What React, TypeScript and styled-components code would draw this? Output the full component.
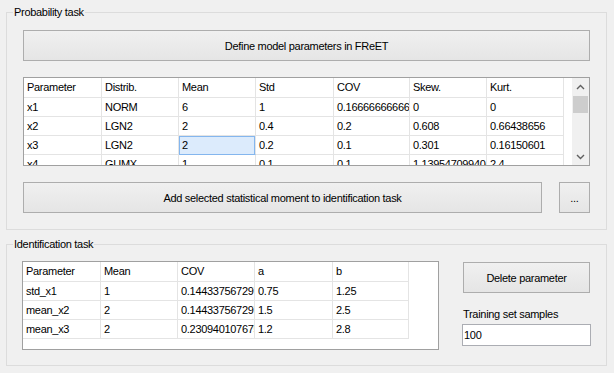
import React from "react";
import styled, { createGlobalStyle } from "styled-components";

const GlobalStyle = createGlobalStyle`
  html, body { margin: 0; padding: 0; background: #f0f0f0; }
  body {
    font-family: "Liberation Sans", Arial, sans-serif;
    font-size: 11px;
    letter-spacing: -0.3px;
    color: #000;
  }
  * { box-sizing: border-box; }
`;

const Window = styled.div`
  width: 614px;
  height: 373px;
  padding: 12px 7px 0 6px;
  display: flex;
  flex-direction: column;
  gap: 14px;
`;

const GroupBox = styled.section`
  border: 1px solid #dcdcdc;
  display: flex;
  flex-direction: column;
`;

const Legend = styled.div`
  align-self: flex-start;
  height: 13px;
  line-height: 13px;
  margin: -7px 0 -6px 6px;
  padding: 0 1px;
  background: #f0f0f0;
  white-space: nowrap;
`;

const ProbBody = styled.div`
  padding: 17px 16px 16px 16px;
  display: flex;
  flex-direction: column;
  gap: 16px;
`;

const IdentBody = styled.div`
  padding: 16px 16px 15px 15px;
  display: flex;
  gap: 24px;
`;

const ButtonRow = styled.div`
  display: flex;
  gap: 17px;
`;

const WinButton = styled.button<{ $w?: number }>`
  height: 31px;
  width: ${(p) => (p.$w ? `${p.$w}px` : "100%")};
  flex: none;
  border: 1px solid #adadad;
  border-radius: 0;
  background: linear-gradient(#f0f0f0, #e5e5e5);
  font: inherit;
  letter-spacing: inherit;
  color: #000;
  padding: 0;
`;

const GridFrame = styled.div<{ $w: number }>`
  width: ${(p) => p.$w}px;
  height: 89px;
  flex: none;
  border: 1px solid #a0a0a0;
  background: #fff;
  display: flex;
  overflow: hidden;
`;

const GridBody = styled.div`
  flex: 1;
  overflow: hidden;
`;

const Row = styled.div<{ $header?: boolean }>`
  display: flex;
  height: ${(p) => (p.$header ? 20 : 19)}px;
`;

const Cell = styled.div<{ $w: number; $header?: boolean; $selected?: boolean }>`
  width: ${(p) => p.$w}px;
  flex: none;
  border-right: 1px solid #e4e4e4;
  border-bottom: 1px solid ${(p) => (p.$selected ? "#84b6ee" : "#e4e4e4")};
  padding-left: 3px;
  line-height: ${(p) => (p.$header ? 19 : 18)}px;
  white-space: nowrap;
  overflow: hidden;
  background: ${(p) => (p.$selected ? "#dcebfc" : "transparent")};
  box-shadow: ${(p) =>
    p.$selected
      ? "inset 1px 0 0 #84b6ee, inset -1px 0 0 #84b6ee, inset 0 1px 0 #84b6ee"
      : "none"};
`;

const ScrollBar = styled.div`
  width: 17px;
  flex: none;
  background: #f0f0f0;
  display: flex;
  flex-direction: column;
`;

const ScrollArrow = styled.div`
  height: 17px;
  flex: none;
  display: flex;
  align-items: center;
  justify-content: center;
`;

const Track = styled.div`
  flex: 1;
  padding: 1px 1px 0 1px;
`;

const Thumb = styled.div`
  height: 17px;
  background: #cdcdcd;
`;

const SideColumn = styled.div`
  width: 127px;
  margin-top: 1px;
  display: flex;
  flex-direction: column;
`;

const FieldLabel = styled.div`
  margin-top: 15px;
  line-height: 13px;
  white-space: nowrap;
`;

const TextBox = styled.input`
  margin: 3px 0 0 -1px;
  width: 129px;
  height: 22px;
  border: 1px solid #abadb3;
  background: #fff;
  font: inherit;
  letter-spacing: inherit;
  color: #000;
  padding: 0 0 0 1px;
  outline: none;
`;

type GridProps = {
  width: number;
  cols: number[];
  header: string[];
  rows: string[][];
  selected?: [number, number];
  scroll?: boolean;
};

const Chevron = ({ up }: { up?: boolean }) => (
  <svg width="9" height="6" viewBox="0 0 9 6">
    <polyline
      points={up ? "1,5 4.5,1.5 8,5" : "1,1 4.5,4.5 8,1"}
      fill="none"
      stroke="#606060"
      strokeWidth="1.4"
    />
  </svg>
);

const DataGrid = ({ width, cols, header, rows, selected, scroll }: GridProps) => (
  <GridFrame $w={width}>
    <GridBody>
      <Row $header>
        {header.map((h, i) => (
          <Cell key={i} $w={cols[i]} $header>
            {h}
          </Cell>
        ))}
      </Row>
      {rows.map((r, ri) => (
        <Row key={ri}>
          {r.map((v, ci) => (
            <Cell
              key={ci}
              $w={cols[ci]}
              $selected={!!selected && selected[0] === ri && selected[1] === ci}
            >
              {v}
            </Cell>
          ))}
        </Row>
      ))}
    </GridBody>
    {scroll && (
      <ScrollBar>
        <ScrollArrow>
          <Chevron up />
        </ScrollArrow>
        <Track>
          <Thumb />
        </Track>
        <ScrollArrow>
          <Chevron />
        </ScrollArrow>
      </ScrollBar>
    )}
  </GridFrame>
);

const probHeader = ["Parameter", "Distrib.", "Mean", "Std", "COV", "Skew.", "Kurt."];
const probRows = [
  ["x1", "NORM", "6", "1", "0.166666666666667", "0", "0"],
  ["x2", "LGN2", "2", "0.4", "0.2", "0.608", "0.66438656"],
  ["x3", "LGN2", "2", "0.2", "0.1", "0.301", "0.16150601"],
  ["x4", "GUMX", "1", "0.1", "0.1", "1.1395470994046", "2.4"],
];

const identHeader = ["Parameter", "Mean", "COV", "a", "b"];
const identRows = [
  ["std_x1", "1", "0.144337567297406", "0.75", "1.25"],
  ["mean_x2", "2", "0.144337567297406", "1.5", "2.5"],
  ["mean_x3", "2", "0.230940107675850", "1.2", "2.8"],
];

export default function App() {
  return (
    <>
      <GlobalStyle />
      <Window>
        <GroupBox>
          <Legend>Probability task</Legend>
          <ProbBody>
            <WinButton>Define model parameters in FReET</WinButton>
            <DataGrid
              width={567}
              cols={[78, 77, 77, 78, 76, 77, 77]}
              header={probHeader}
              rows={probRows}
              selected={[2, 2]}
              scroll
            />
            <ButtonRow>
              <WinButton $w={519}>Add selected statistical moment to identification task</WinButton>
              <WinButton $w={31}>...</WinButton>
            </ButtonRow>
          </ProbBody>
        </GroupBox>
        <GroupBox>
          <Legend>Identification task</Legend>
          <IdentBody>
            <DataGrid
              width={417}
              cols={[78, 77, 77, 78, 76]}
              header={identHeader}
              rows={identRows}
            />
            <SideColumn>
              <WinButton>Delete parameter</WinButton>
              <FieldLabel>Training set samples</FieldLabel>
              <TextBox defaultValue="100" />
            </SideColumn>
          </IdentBody>
        </GroupBox>
      </Window>
    </>
  );
}
